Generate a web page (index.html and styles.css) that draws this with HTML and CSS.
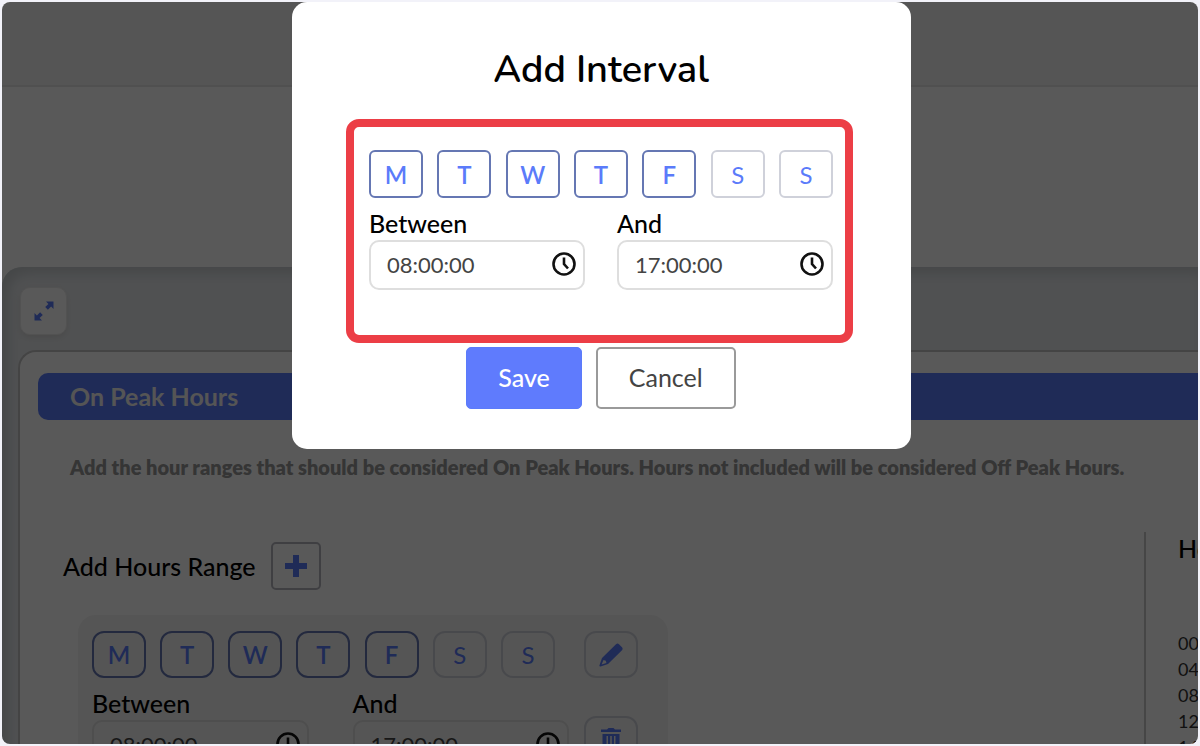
FILE: index.html
```html
<!DOCTYPE html>
<html lang="en">
<head>
<meta charset="utf-8">
<title>Add Interval</title>
<link rel="stylesheet" href="styles.css">
</head>
<body>
<svg class="sprite" aria-hidden="true">
  <symbol id="clock" viewBox="0 0 24 24"><circle cx="12" cy="12" r="10.5" fill="none" stroke="currentColor" stroke-width="2.6"/><path d="M12 5.500v6.500l4 4.500" fill="none" stroke="currentColor" stroke-width="2.600"/></symbol>
</svg>
<div class="window">
  <header class="topbar"></header>
  <div class="toolbar"></div>
  <main class="panel">
    <button class="expand" type="button" aria-label="Expand">
      <svg viewBox="0 0 20 20" width="20" height="20"><path d="M12 0.5h7.5V8l-2.4-2.4-3.2 3.2-2.7-2.7 3.2-3.2zM8 19.500H.5V12l2.400 2.400 3.200-3.200 2.700 2.700-3.200 3.200z" fill="currentColor"/></svg>
    </button>
    <section class="card">
      <h2 class="banner">On Peak Hours</h2>
      <p class="hint">Add the hour ranges that should be considered On Peak Hours. Hours not included will be considered Off Peak Hours.</p>
      <div class="columns">
        <div class="ranges">
          <div class="add-row">
            <h3 class="subtitle">Add Hours Range</h3>
            <button class="add" type="button" aria-label="Add range"><svg viewBox="0 0 22 22" width="22" height="22"><path d="M8 0h6v8h8v6h-8v8H8v-8H0V8h8z" fill="currentColor"/></svg></button>
          </div>
          <div class="range">
            <div class="range-main">
              <div class="days">
                <button type="button" class="day on">M</button><button type="button" class="day on">T</button><button type="button" class="day on">W</button><button type="button" class="day on">T</button><button type="button" class="day on">F</button><button type="button" class="day">S</button><button type="button" class="day">S</button>
              </div>
              <div class="times">
                <div class="field"><label for="r-from">Between</label><div class="time"><input id="r-from" type="text" value="08:00:00"><svg class="clock"><use href="#clock"/></svg></div></div>
                <div class="field"><label for="r-to">And</label><div class="time"><input id="r-to" type="text" value="17:00:00"><svg class="clock"><use href="#clock"/></svg></div></div>
              </div>
            </div>
            <div class="actions">
              <button type="button" class="day" aria-label="Edit"><svg viewBox="0 0 24 24" width="24" height="24"><path fill="currentColor" fill-rule="evenodd" d="M17 1.200q1.500-1.200 3 0l3 3q1.200 1.500 0 3L9 21 1.500 23.500q-1.400.2-1-1.200L3 15zM4.500 17l-1.900 4.500 4.800-1.500-.6-2.200z"/></svg></button>
              <button type="button" class="day" aria-label="Delete"><svg viewBox="0 0 20 24" width="20" height="24"><path fill="currentColor" fill-rule="evenodd" d="M6 1.500L7.500 0h5L14 1.500h6V4H0V1.500zM1.500 6h17v15.500q0 2.500-2.500 2.500H4q-2.500 0-2.500-2.500zM5.500 8v13H7V8zm3.700 0v13h1.600V8zM13 8v13h1.500V8z"/></svg></button>
            </div>
          </div>
        </div>
        <aside class="hours">
          <h3 class="subtitle">Hours</h3>
          <ul class="hour-list"><li>00</li><li>04</li><li>08</li><li>12</li><li>16</li></ul>
        </aside>
      </div>
    </section>
  </main>
  <div class="overlay">
    <form class="modal" role="dialog" aria-labelledby="modal-title">
      <h1 class="modal-title" id="modal-title">Add Interval</h1>
      <div class="highlight">
        <div class="days">
          <button type="button" class="day on">M</button><button type="button" class="day on">T</button><button type="button" class="day on">W</button><button type="button" class="day on">T</button><button type="button" class="day on">F</button><button type="button" class="day">S</button><button type="button" class="day">S</button>
        </div>
        <div class="times">
          <div class="field"><label for="m-from">Between</label><div class="time"><input id="m-from" type="text" value="08:00:00"><svg class="clock"><use href="#clock"/></svg></div></div>
          <div class="field"><label for="m-to">And</label><div class="time"><input id="m-to" type="text" value="17:00:00"><svg class="clock"><use href="#clock"/></svg></div></div>
        </div>
      </div>
      <div class="buttons">
        <button type="button" class="btn save">Save</button>
        <button type="button" class="btn cancel">Cancel</button>
      </div>
    </form>
  </div>
</div>
</body>
</html>
```
FILE: styles.css
```css
* { box-sizing: border-box; }
body {
  margin: 0;
  padding: 2px;
  background: #f2f2f9;
  color: #000;
  font-family: Lato, "Open Sans", sans-serif;
  font-size: 25px;
}
h1, h2, h3, p, ul { margin: 0; padding: 0; }
button, input { font: inherit; }
button { display: flex; align-items: center; justify-content: center; padding: 0; cursor: pointer; }
.sprite { display: none; }
.window {
  position: relative;
  height: calc(100vh - 4px);
  overflow: hidden;
  border-radius: 8px;
  background: #fff;
}
.topbar { height: 85px; background: #f3f3f3; border-bottom: 2px solid #e6e6e6; }
.toolbar { height: 180px; }
.panel {
  padding: 20px 0 0 16px;
  border-radius: 20px 0 0 0;
  background: #e6e9ec;
  box-shadow: inset 6px 6px 14px #c4c9cc;
}
.expand {
  width: 47px;
  height: 48px;
  margin: 0 0 15px 2px;
  border: 1px solid #ececec;
  border-radius: 10px;
  background: #fff;
  color: #5b7bfa;
  box-shadow: 0 3px 6px #d5d5d5;
}
.card {
  height: 460px;
  padding: 21px 0 0 18px;
  border: solid #c4c4c4;
  border-width: 2px 0 0 2px;
  border-radius: 18px 0 0 0;
  background: #fff;
}
.banner {
  padding-left: 32px;
  border-radius: 10px 0 0 10px;
  background: #5b7bfa;
  color: #f3f3f3;
  font-size: 25px;
  font-weight: 700;
  line-height: 47px;
}
.hint {
  padding: 33px 0 0 32px;
  color: #979797;
  font-size: 20px;
  font-weight: 800;
  line-height: 28px;
  white-space: nowrap;
}
.columns { display: flex; justify-content: space-between; padding-top: 51px; }
.ranges { padding: 10px 0 0 25px; }
.subtitle { font-size: 25px; font-weight: 500; line-height: 32px; }
.add-row { display: flex; align-items: center; gap: 15px; }
.add { width: 50px; height: 48px; border: 2px solid #b5b5be; border-radius: 5px; background: none; color: #5b7bfa; }
.range {
  display: flex;
  gap: 15px;
  margin: 25px 0 0 15px;
  padding: 16px 30px 30px 14px;
  border-radius: 18px;
  background: #f3f3f3;
}
.range-main { width: 477px; }
.range .days { padding-right: 14px; }
.range .times { gap: 44px; }
.range .day { height: 47px; border-radius: 12px; }
.range input { border-radius: 12px; }
.actions { display: flex; flex-direction: column; gap: 38px; }
.hours { width: 54px; height: 300px; padding-left: 32px; border-left: 2px solid #c8c8c8; overflow: hidden; }
.hour-list { padding-top: 66px; list-style: none; font-size: 18px; line-height: 26px; color: #333; }
.overlay {
  position: absolute;
  inset: 0;
  display: flex;
  align-items: flex-start;
  justify-content: center;
  padding-left: 3px;
  background: rgba(0, 0, 0, 0.65);
}
.modal {
  width: 619px;
  padding: 45px 58px 40px 54px;
  border-radius: 15px;
  background: #fff;
}
.modal-title { padding-left: 3px; font-family: Nunito, Lato, sans-serif; font-size: 38px; font-weight: 600; line-height: 46px; text-align: center; }
.highlight {
  margin-top: 26px;
  padding: 23px 12px 45px 15px;
  border: 8px solid #ec3e46;
  border-radius: 13px;
}
.days { display: flex; justify-content: space-between; }
.day { width: 54px; height: 48px; border: 2px solid #cfd1da; border-radius: 6px; background: none; color: #5b7bfa; font-size: 24px; }
.day.on { border-color: #6577b3; font-weight: 600; }
.times { display: grid; grid-template-columns: 1fr 1fr; gap: 32px; padding-top: 9px; }
.field label { display: block; padding-bottom: 1px; font-weight: 500; line-height: 32px; }
.time { position: relative; }
.time input {
  display: block;
  width: 100%;
  height: 50px;
  padding: 0 16px 2px;
  border: 2px solid #dedede;
  border-radius: 10px;
  background: none;
  color: #444;
  font-size: 22px;
}
.clock { position: absolute; top: 12px; right: 9px; width: 24px; height: 24px; color: #111; }
.buttons { display: flex; justify-content: center; gap: 14px; padding: 4px 0 0 3px; }
.btn { height: 62px; padding: 0 31px 2px; border: 1px solid #5b7bfa; border-radius: 5px; font-size: 25px; }
.save { background: #5f7bfd; color: #fff; font-weight: 500; }
.cancel { border: 2px solid #9a9a9a; background: #fff; color: #444; }
```
